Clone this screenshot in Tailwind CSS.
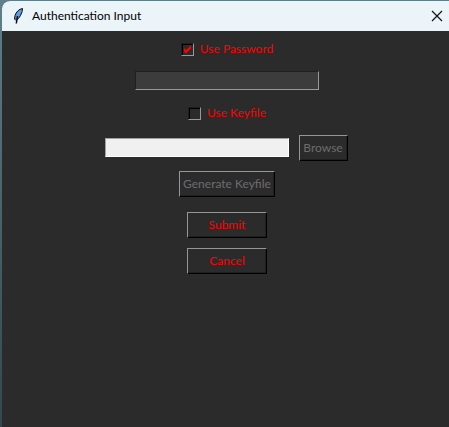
<!DOCTYPE html>
<html lang="en">
<head>
<meta charset="utf-8">
<meta name="viewport" content="width=device-width, initial-scale=1">
<title>Authentication Input</title>
<script src="https://cdn.jsdelivr.net/npm/@tailwindcss/browser@4"></script>
</head>
<body class="min-h-screen flex flex-col bg-linear-to-b from-[#5f7f8a] to-[#34474f] pt-px pl-0.5 font-[Lato,'Open_Sans',sans-serif] text-[12px] leading-4">
<div class="flex grow flex-col overflow-hidden rounded-tl-lg bg-[#2b2b2b]">
  <header class="flex h-[30px] items-center bg-[#ebf4f9] pl-2.5 pr-1.5 text-black">
    <svg class="h-4 w-3 shrink-0" viewBox="0 0 12 16" aria-hidden="true">
      <path d="M10.500 0.500C7 1 4 4 3 7.500L2.500 11L4 12.500L6.500 10.500L8.500 7.500L10 4Z" fill="#4f91dc" stroke="#111" stroke-width="1"/>
      <path d="M9 2.500L6.500 5.500L4.800 9.500" fill="none" stroke="#5a9fee" stroke-width="2"/>
      <path d="M5.500 8L4.300 15.500" fill="none" stroke="#111" stroke-width="1.500"/>
    </svg>
    <h1 class="ml-2 grow">Authentication Input</h1>
    <button type="button" aria-label="Close" class="flex h-4 w-3 items-center justify-center">
      <svg class="size-3" viewBox="0 0 12 12" fill="none" stroke="#111" stroke-width="1.2"><path d="M1 1L11 11M11 1L1 11"/></svg>
    </button>
  </header>
  <form class="flex flex-col items-center pl-[3px] pt-2 text-[#ff0000]">
    <label class="flex h-5 items-center gap-1.5">
      <span class="relative flex size-[13px]">
        <input type="checkbox" checked class="peer size-[13px] appearance-none border border-t-[#1e1e1e] border-l-[#1e1e1e] border-r-[#999] border-b-[#999] shadow-[inset_1px_1px_0_#000]">
        <svg class="pointer-events-none absolute inset-0 hidden size-[13px] peer-checked:block" viewBox="0 0 13 13" aria-hidden="true"><path d="M3 5L5 7L10 2.500V5.500L5 10.500L3 8.500Z" fill="#f00"/></svg>
      </span>
      Use Password
    </label>
    <input type="password" disabled aria-label="Password" class="mt-3 h-[19px] w-[184px] border border-t-[#202020] border-l-[#202020] border-r-[#999] border-b-[#999] bg-[#3c3c3c] px-0.5">
    <label class="mt-[13px] flex h-5 items-center gap-1.5">
      <input type="checkbox" class="size-[13px] appearance-none border border-t-[#1e1e1e] border-l-[#1e1e1e] border-r-[#999] border-b-[#999] shadow-[inset_1px_1px_0_#000] checked:bg-[#f00]">
      Use Keyfile
    </label>
    <div class="mt-3 flex items-start gap-2.5 pr-0.5">
      <input type="text" disabled aria-label="Keyfile path" class="mt-[3px] h-[19px] w-[184px] border border-t-[#a0a0a0] border-l-[#a0a0a0] border-r-white border-b-white bg-[#f0f0f0] px-0.5">
      <button type="button" disabled class="h-[26px] w-[49px] border border-t-[#959595] border-l-[#959595] border-r-black border-b-black text-center whitespace-nowrap text-[#6d6d6d] shadow-[inset_-1px_-1px_0_#202020]">Browse</button>
    </div>
    <button type="button" disabled class="mt-2.5 h-[26px] w-24 border border-t-[#959595] border-l-[#959595] border-r-black border-b-black text-center whitespace-nowrap text-[#6d6d6d] shadow-[inset_-1px_-1px_0_#202020]">Generate Keyfile</button>
    <button type="submit" class="mt-[15px] h-[26px] w-20 border border-t-[#959595] border-l-[#959595] border-r-black border-b-black text-center shadow-[inset_-1px_-1px_0_#202020]">Submit</button>
    <button type="button" class="mt-2.5 h-[26px] w-20 border border-t-[#959595] border-l-[#959595] border-r-black border-b-black text-center shadow-[inset_-1px_-1px_0_#202020]">Cancel</button>
  </form>
</div>
</body>
</html>
